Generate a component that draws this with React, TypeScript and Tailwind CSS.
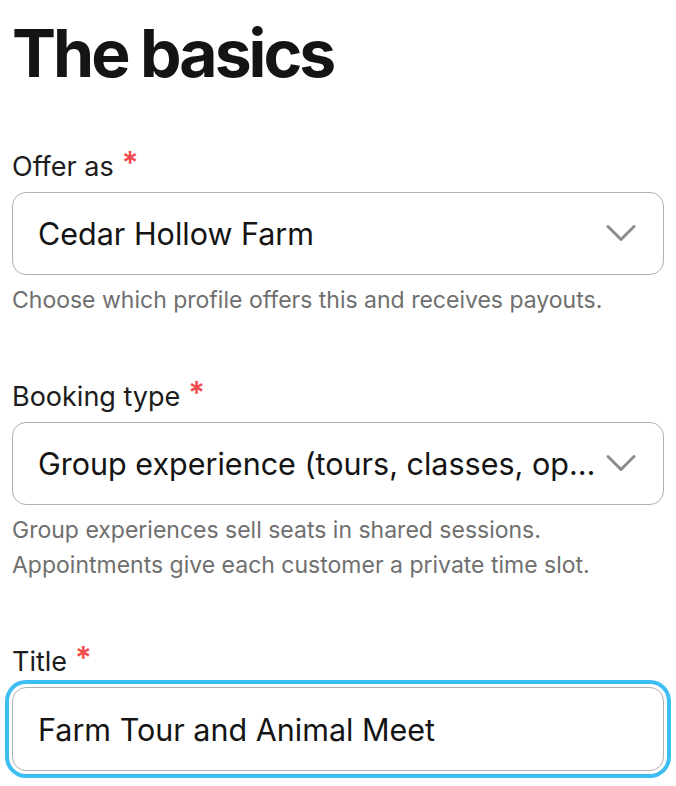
import React from "react";

function Chevron() {
  return (
    <svg width="30" height="19" viewBox="0 0 30 19" fill="none" className="shrink-0">
      <polyline
        points="2,2.5 15,15.5 28,2.5"
        stroke="#8c8c8c"
        strokeWidth="3"
        strokeLinecap="round"
        strokeLinejoin="round"
      />
    </svg>
  );
}

function Label({ children }: { children: React.ReactNode }) {
  return (
    <label className="flex items-start text-[27px] leading-[32px] text-[#1c1c1c] mb-[9px]">
      {children}
      <span className="ml-[8px] text-[#f04b4b] text-[31px] leading-[24px] font-semibold">*</span>
    </label>
  );
}

function Select({ value }: { value: string }) {
  return (
    <div className="flex items-center h-[83px] rounded-[14px] border-[1.5px] border-[#b1b1b1] bg-white pl-[25px] pr-[27px]">
      <span className="flex-1 min-w-0 truncate text-[30.5px] text-[#141414] pr-[10px]">{value}</span>
      <Chevron />
    </div>
  );
}

export default function App() {
  return (
    <div
      className="min-h-screen bg-white px-3 pt-[13px]"
      style={{ fontFamily: "Inter, 'Noto Sans', sans-serif" }}
    >
      <h1 className="text-[66px] leading-[80px] font-bold tracking-[-3px] text-[#141414]">The basics</h1>

      <div className="mt-[58px]">
        <Label>Offer as</Label>
        <Select value="Cedar Hollow Farm" />
        <p className="mt-2 text-[23px] leading-[35px] text-[#6f6f6f]">
          Choose which profile offers this and receives payouts.
        </p>
      </div>

      <div className="mt-[63px]">
        <Label>Booking type</Label>
        <Select value="Group experience (tours, classes, open farm days)" />
        <p className="mt-2 text-[23px] leading-[35px] text-[#6f6f6f]">
          Group experiences sell seats in shared sessions.
          <br />
          Appointments give each customer a private time slot.
        </p>
      </div>

      <div className="mt-[63px]">
        <Label>Title</Label>
        <input
          readOnly
          value="Farm Tour and Animal Meet"
          className="block w-full h-[84px] rounded-[14px] border-[1.5px] border-[#b1b1b1] bg-white pl-[25px] pr-[25px] text-[30.5px] text-[#141414] outline-none ring-4 ring-[#3cbef2] ring-offset-[3px] ring-offset-white"
          style={{ fontFamily: "Inter, 'Noto Sans', sans-serif" }}
        />
      </div>
    </div>
  );
}
